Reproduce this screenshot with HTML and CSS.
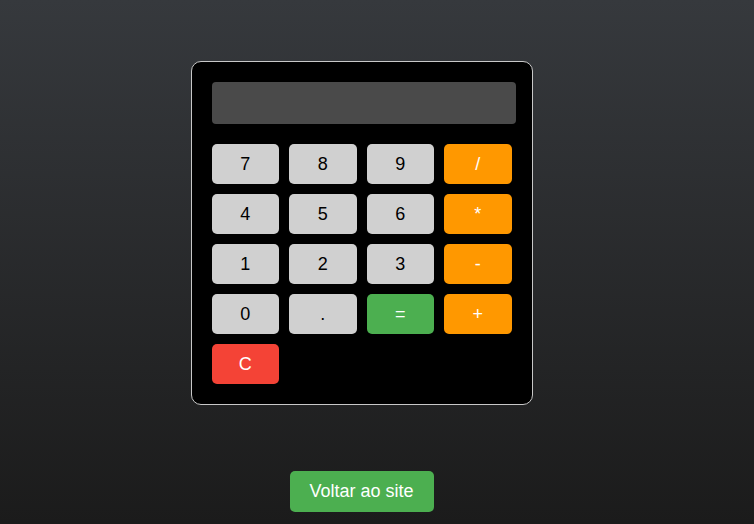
FILE: index.html
```html
<!DOCTYPE html>
<html lang="pt">
<head>
<meta charset="utf-8">
<title>Calculadora</title>
<link rel="stylesheet" href="styles.css">
</head>
<body>
<div class="page">
  <div class="calculator">
    <div class="display"></div>
    <div class="keys">
      <button class="key">7</button>
      <button class="key">8</button>
      <button class="key">9</button>
      <button class="key op">/</button>
      <button class="key">4</button>
      <button class="key">5</button>
      <button class="key">6</button>
      <button class="key op">*</button>
      <button class="key">1</button>
      <button class="key">2</button>
      <button class="key">3</button>
      <button class="key op">-</button>
      <button class="key">0</button>
      <button class="key">.</button>
      <button class="key eq">=</button>
      <button class="key op">+</button>
      <button class="key clear">C</button>
    </div>
  </div>
  <a class="back" href="#">Voltar ao site</a>
</div>
</body>
</html>
```
FILE: styles.css
```css
html, body {
  margin: 0;
  height: 100%;
}
body {
  background: linear-gradient(to bottom, #36393d 0%, #1b1b1b 100%);
  font-family: "Liberation Sans", Arial, sans-serif;
  min-height: 524px;
}
.page {
  width: 723px;
  display: flex;
  flex-direction: column;
  align-items: center;
  padding-top: 61px;
}
.calculator {
  width: 300px;
  padding: 20px;
  background: #000;
  border: 1px solid #c8c8c8;
  border-radius: 10px;
}
.display {
  width: 304px;
  height: 42px;
  background: #4a4a4a;
  border-radius: 4px;
  margin-bottom: 20px;
}
.keys {
  display: grid;
  grid-template-columns: repeat(4, 1fr);
  gap: 10px;
}
.key {
  height: 40px;
  border: none;
  border-radius: 5px;
  background: #d0d0d0;
  color: #000;
  font-family: "Liberation Sans", Arial, sans-serif;
  font-size: 18px;
  padding: 0;
}
.op {
  background: #ff9800;
  color: #fff;
}
.eq {
  background: #4caf50;
  color: #fff;
}
.clear {
  background: #f44336;
  color: #fff;
}
.back {
  margin-top: 66px;
  display: block;
  width: 144px;
  height: 41px;
  line-height: 41px;
  text-align: center;
  background: #4caf50;
  color: #fff;
  text-decoration: none;
  font-size: 18px;
  border-radius: 5px;
}
```
